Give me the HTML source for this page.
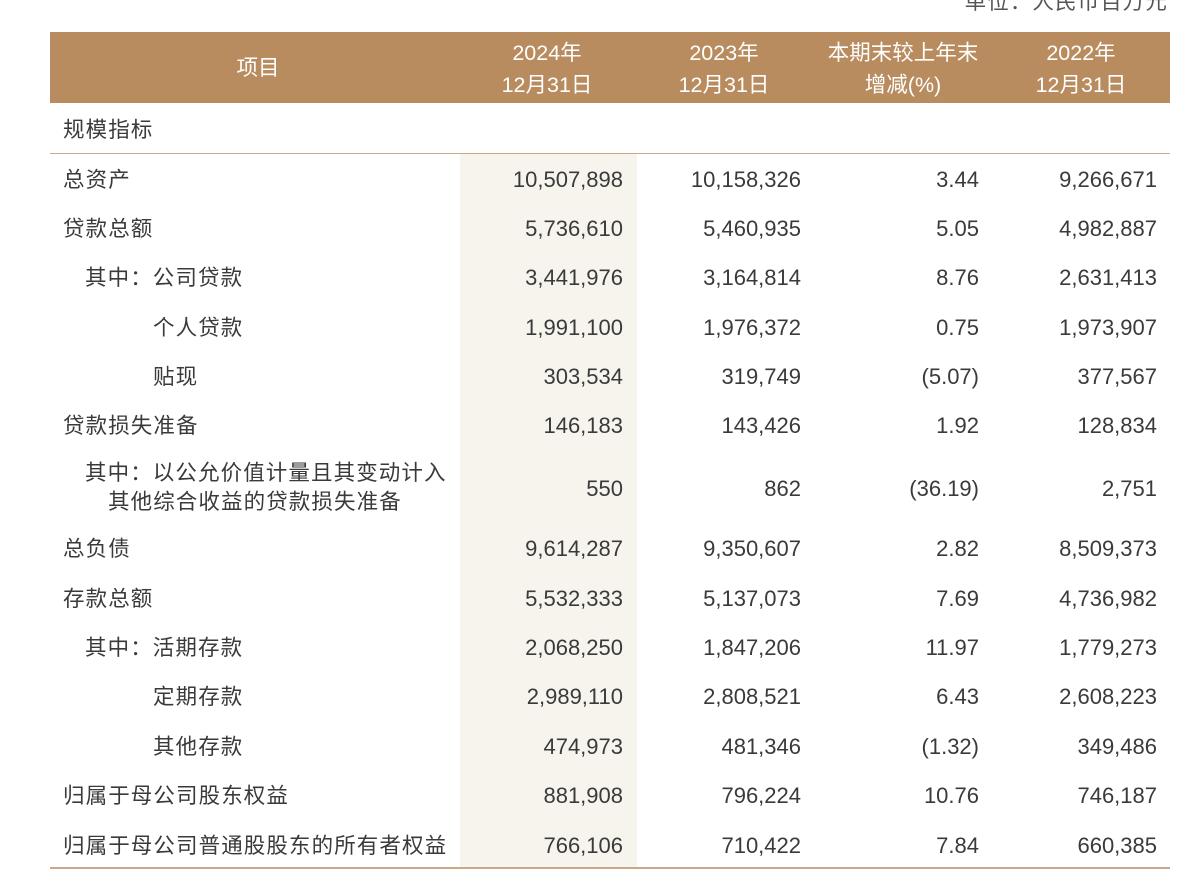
<!DOCTYPE html>
<html><head><meta charset="utf-8"><style>
body{margin:0;width:1196px;height:880px;background:#fff;position:relative;overflow:hidden;font-family:"Liberation Sans","Noto Sans CJK SC",sans-serif;color:#3a3a3a;font-size:22px}
.a{position:absolute;white-space:nowrap;line-height:26px}
.c{font-size:21.5px;letter-spacing:1.1px}
.r{text-align:right;width:200px}
.hd{position:absolute;left:50px;top:32px;width:1120px;height:71px;background:#b98c60}
.h{position:absolute;color:#fff;text-align:center;width:220px;line-height:32px;font-size:21.5px}
.hl{position:absolute;left:460px;top:154px;width:177px;height:714px;background:#f7f4ee}
.ln{position:absolute;left:50px;width:1120px;height:1px;background:#c9a98a}
</style></head><body>
<div class="a c" style="right:28px;top:-11px;color:#555">单位：人民币百万元</div>
<div class="hd"></div>
<div class="h" style="left:148px;top:52px">项目</div>
<div class="h" style="left:437px;top:37px">2024年<br>12月31日</div>
<div class="h" style="left:614px;top:37px">2023年<br>12月31日</div>
<div class="h" style="left:793px;top:37px">本期末较上年末<br>增减(%)</div>
<div class="h" style="left:971px;top:37px">2022年<br>12月31日</div>
<div class="a c" style="left:63px;top:117px">规模指标</div>
<div class="ln" style="top:153px"></div>
<div class="hl"></div>
<div class="ln" style="top:867px;height:2px"></div>
<div id="rows"></div>
<script>
var d=[["总资产",63,180,"10,507,898","10,158,326","3.44","9,266,671"],
["贷款总额",63,229,"5,736,610","5,460,935","5.05","4,982,887"],
["其中：公司贷款",85,278,"3,441,976","3,164,814","8.76","2,631,413"],
["个人贷款",153,328,"1,991,100","1,976,372","0.75","1,973,907"],
["贴现",153,377,"303,534","319,749","(5.07)","377,567"],
["贷款损失准备",63,426,"146,183","143,426","1.92","128,834"],
["",85,489,"550","862","(36.19)","2,751"],
["总负债",63,549,"9,614,287","9,350,607","2.82","8,509,373"],
["存款总额",63,599,"5,532,333","5,137,073","7.69","4,736,982"],
["其中：活期存款",85,648,"2,068,250","1,847,206","11.97","1,779,273"],
["定期存款",153,697,"2,989,110","2,808,521","6.43","2,608,223"],
["其他存款",153,747,"474,973","481,346","(1.32)","349,486"],
["归属于母公司股东权益",63,796,"881,908","796,224","10.76","746,187"],
["归属于母公司普通股股东的所有者权益",63,846,"766,106","710,422","7.84","660,385"]];
var h="",R=[623,801,979,1157];
d.forEach(function(x){var t=x[2]-13;
if(x[0])h+='<div class="a c" style="left:'+x[1]+'px;top:'+t+'px">'+x[0]+'</div>';
for(var i=0;i<4;i++)h+='<div class="a r" style="left:'+(R[i]-200)+'px;top:'+t+'px">'+x[3+i]+'</div>';});
h+='<div class="a c" style="left:85px;top:460px">其中：以公允价值计量且其变动计入</div><div class="a c" style="left:108px;top:489px">其他综合收益的贷款损失准备</div>';
document.getElementById("rows").innerHTML=h;
</script>
</body></html>
